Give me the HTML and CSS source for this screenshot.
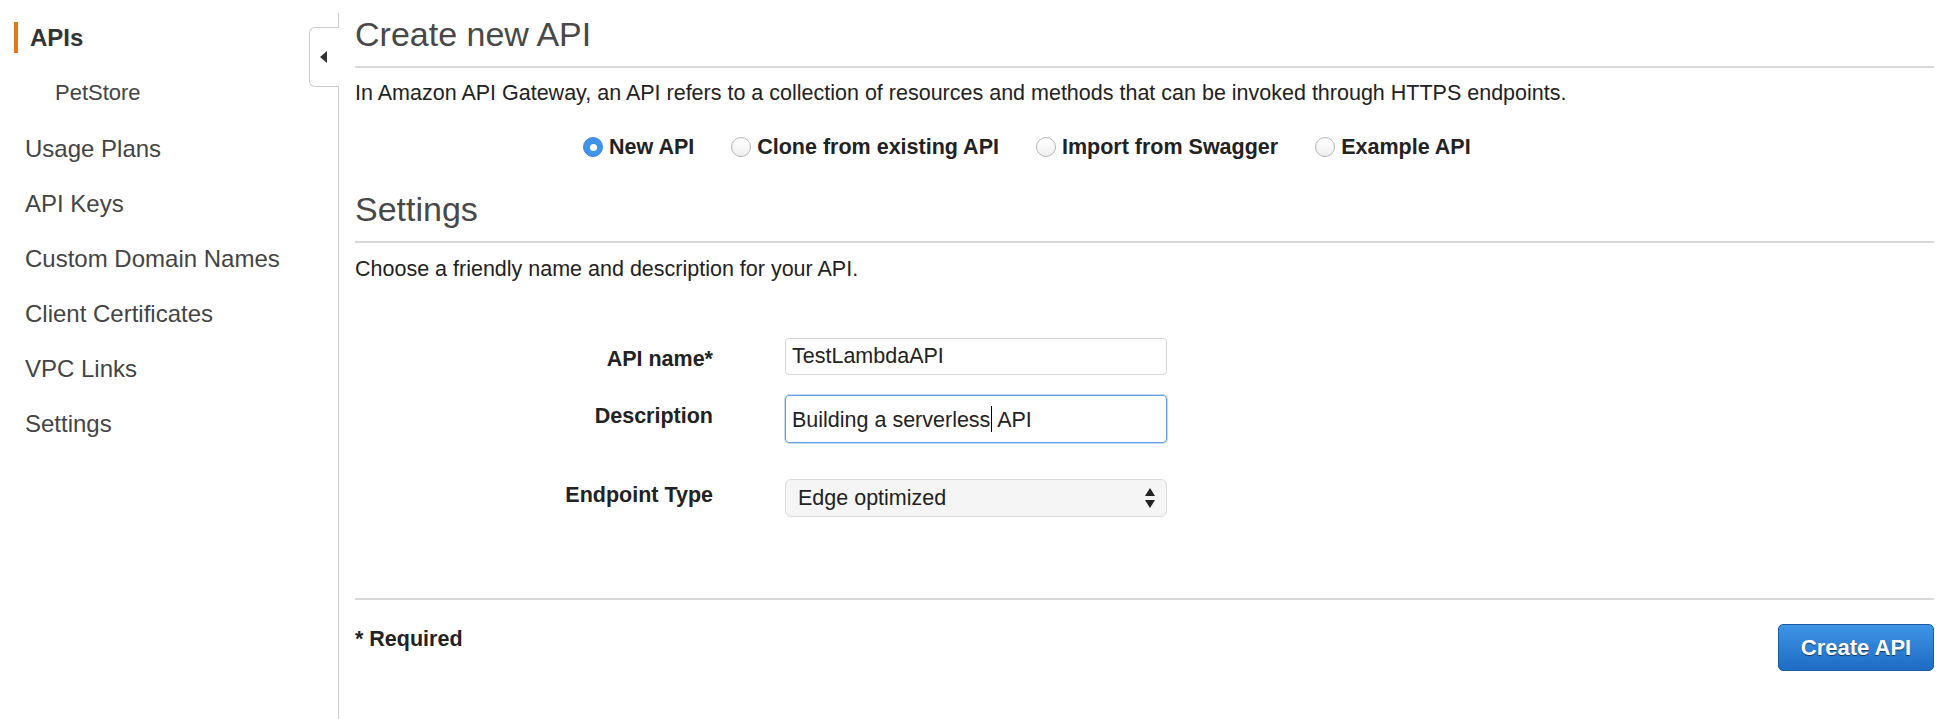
FILE: index.html
```html
<!DOCTYPE html>
<html lang="en">
<head>
<meta charset="utf-8">
<title>Create new API</title>
<link rel="stylesheet" href="styles.css">
</head>
<body>
<div class="layout">
  <nav class="sidebar">
    <div class="nav-item nav-active"><span class="nav-bar"></span><span class="nav-active-text">APIs</span></div>
    <div class="nav-sub">PetStore</div>
    <div class="nav-item">Usage Plans</div>
    <div class="nav-item">API Keys</div>
    <div class="nav-item">Custom Domain Names</div>
    <div class="nav-item">Client Certificates</div>
    <div class="nav-item">VPC Links</div>
    <div class="nav-item">Settings</div>
  </nav>
  <div class="divider">
    <div class="collapse-tab">
      <svg width="7" height="12" viewBox="0 0 7 12"><path d="M7 0 L0 6 L7 12 Z" fill="#333"/></svg>
    </div>
  </div>
  <main class="main">
    <h1 class="heading">Create new API</h1>
    <hr class="rule">
    <p class="intro">In Amazon API Gateway, an API refers to a collection of resources and methods that can be invoked through HTTPS endpoints.</p>
    <div class="radios">
      <label class="radio-opt"><span class="radio radio-on"><span class="radio-dot"></span></span><span class="radio-label">New API</span></label>
      <label class="radio-opt"><span class="radio"></span><span class="radio-label">Clone from existing API</span></label>
      <label class="radio-opt"><span class="radio"></span><span class="radio-label">Import from Swagger</span></label>
      <label class="radio-opt"><span class="radio"></span><span class="radio-label">Example API</span></label>
    </div>
    <h2 class="heading heading-settings">Settings</h2>
    <hr class="rule">
    <p class="intro intro-settings">Choose a friendly name and description for your API.</p>
    <div class="form">
      <div class="form-label">API name*</div>
      <div class="field field-name"><span class="field-text">TestLambdaAPI</span></div>
      <div class="form-label">Description</div>
      <div class="field field-desc"><span class="field-text">Building a serverless<span class="caret"></span> API</span></div>
      <div class="form-label form-label-select">Endpoint Type</div>
      <div class="select">
        <span>Edge optimized</span>
        <svg class="select-arrows" width="10" height="20" viewBox="0 0 10 20"><path d="M5 0 L10 8 L0 8 Z M0 12 L10 12 L5 20 Z" fill="#222"/></svg>
      </div>
    </div>
    <hr class="rule rule-footer">
    <div class="footer">
      <div class="required">* Required</div>
      <button class="btn-primary">Create API</button>
    </div>
  </main>
</div>
</body>
</html>
```
FILE: styles.css
```css
* { box-sizing: border-box; }
html, body { margin: 0; padding: 0; background: #fff; }
body {
  font-family: "Liberation Sans", Arial, Helvetica, sans-serif;
  color: #222;
}
.layout {
  display: flex;
  min-height: 719px;
}
.sidebar {
  width: 338px;
  flex: none;
  padding-top: 10px;
}
.nav-item {
  font-size: 24px;
  line-height: 55px;
  color: #444;
  padding-left: 25px;
}
.nav-active {
  display: flex;
  align-items: center;
  padding-left: 14px;
  font-weight: bold;
  color: #333;
}
.nav-bar {
  width: 4px;
  height: 31px;
  background: #e47911;
  margin-right: 12px;
}
.nav-sub {
  font-size: 22px;
  line-height: 56px;
  color: #444;
  padding-left: 55px;
}
.divider {
  width: 1px;
  flex: none;
  margin-top: 13px;
  background: #ccc;
  position: relative;
}
.collapse-tab {
  position: absolute;
  left: -29px;
  top: 14px;
  width: 30px;
  height: 60px;
  background: #fff;
  border: 1px solid #ccc;
  border-right: none;
  border-radius: 6px 0 0 6px;
  display: flex;
  align-items: center;
  padding-left: 10px;
}
.main {
  flex: 1;
  padding: 14px 16px 0 16px;
}
.heading {
  margin: 0;
  font-size: 34px;
  line-height: 40px;
  font-weight: normal;
  color: #484848;
}
.heading-settings { margin-top: 27px; }
.rule {
  border: none;
  height: 2px;
  background: #d9d9d9;
  margin: 12px 0 0 0;
}
.intro {
  margin: 10px 0 0 0;
  font-size: 21.5px;
  line-height: 30px;
  color: #222;
}
.intro-settings { margin-top: 11px; }
.radios {
  display: flex;
  gap: 37px;
  margin: 24px 0 0 228px;
}
.radio-opt {
  display: flex;
  align-items: center;
  gap: 6px;
}
.radio {
  width: 20px;
  height: 20px;
  border-radius: 50%;
  border: 1px solid #b5b5b5;
  background: linear-gradient(#fff, #f0f0f0);
  display: flex;
  align-items: center;
  justify-content: center;
}
.radio-on {
  border-color: #3a8ae0;
  background: #3f93ea;
}
.radio-dot {
  width: 7px;
  height: 7px;
  border-radius: 50%;
  background: #fff;
}
.radio-label {
  font-size: 21.5px;
  line-height: 30px;
  font-weight: bold;
  color: #222;
}
.form {
  display: grid;
  grid-template-columns: 358px 382px;
  column-gap: 72px;
  row-gap: 20px;
  margin-top: 54px;
}
.form-label {
  font-size: 21.5px;
  line-height: 30px;
  font-weight: bold;
  color: #222;
  text-align: right;
  padding-top: 6px;
}
.form-label-select { padding-top: 1px; margin-top: 16px; }
.field {
  border: 1px solid #d6d6d6;
  border-radius: 4px;
  font-size: 21.5px;
  color: #222;
  padding-left: 6px;
  display: flex;
  align-items: center;
}
.field-text { white-space: pre; }
.field-name { height: 37px; }
.field-desc {
  height: 48px;
  border-color: #5f9ee6;
  box-shadow: 0 0 0 1px rgba(95, 158, 230, 0.35);
}
.caret {
  display: inline-block;
  width: 1px;
  height: 26px;
  background: #000;
  vertical-align: -5px;
  margin-left: 1px;
}
.select {
  margin-top: 16px;
  height: 38px;
  border: 1px solid #dcdcdc;
  border-radius: 6px;
  background: #f5f5f5;
  font-size: 21.5px;
  color: #222;
  padding: 0 11px 0 12px;
  display: flex;
  align-items: center;
  justify-content: space-between;
}
.select-arrows { display: block; }
.rule-footer { margin-top: 81px; }
.footer {
  display: flex;
  justify-content: space-between;
  align-items: flex-start;
  margin-top: 24px;
}
.required {
  font-size: 21.5px;
  line-height: 30px;
  font-weight: bold;
  color: #222;
}
.btn-primary {
  width: 156px;
  height: 47px;
  border: 1px solid #1a5ba6;
  border-radius: 5px;
  background: linear-gradient(#3f94e6, #1e6cc4);
  color: #fff;
  font-family: "Liberation Sans", Arial, sans-serif;
  font-weight: bold;
  font-size: 22px;
  text-shadow: 0 1px 1px rgba(0, 0, 0, 0.55);
  padding: 0;
}
```
